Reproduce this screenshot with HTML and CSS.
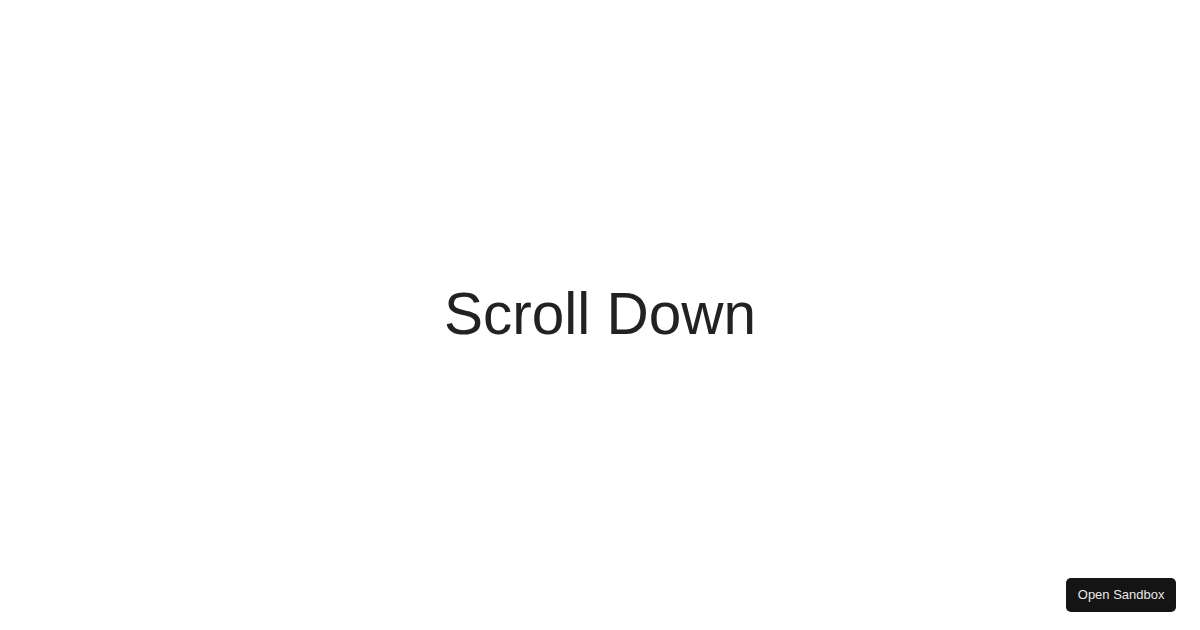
FILE: index.html
```html
<!DOCTYPE html>
<html>
<head>
<meta charset="utf-8">
<link rel="stylesheet" href="styles.css">
</head>
<body>
<main class="page">
  <h1 class="title">Scroll Down</h1>
</main>
<button class="sandbox-btn">Open Sandbox</button>
</body>
</html>
```
FILE: styles.css
```css
html, body {
  margin: 0;
  padding: 0;
  background: #ffffff;
}
.page {
  height: 630px;
  display: flex;
  align-items: center;
  justify-content: center;
}
.title {
  margin: 0;
  font-family: "Liberation Sans", Arial, sans-serif;
  font-weight: 400;
  font-size: 58.5px;
  color: #222222;
  line-height: 1;
  transform: translateY(-1px);
}
.sandbox-btn {
  position: fixed;
  right: 24px;
  bottom: 18px;
  height: 34px;
  padding: 0 11.5px 1px;
  background: #141414;
  color: #e8e8e8;
  border: none;
  border-radius: 5px;
  font-family: "Liberation Sans", Arial, sans-serif;
  font-size: 13px;
}
```
